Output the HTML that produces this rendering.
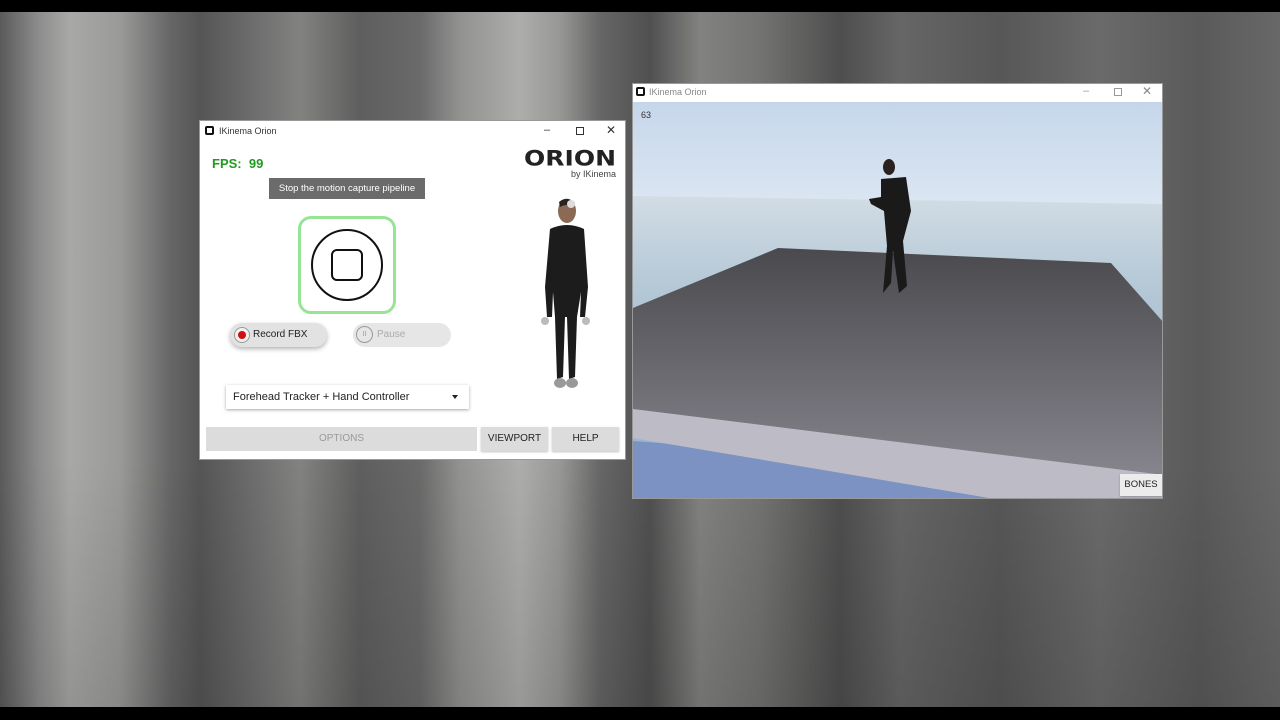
<!DOCTYPE html>
<html><head><meta charset="utf-8"><style>
*{margin:0;padding:0;box-sizing:border-box}
body{width:1280px;height:720px;overflow:hidden;position:relative;font-family:"Liberation Sans",sans-serif;background:#6a6a6a}
.abs{position:absolute}
.bg{left:0;top:0;width:1280px;height:720px;background:
linear-gradient(90deg,#5a5a5a 0px,#8e8e8e 40px,#a8a8a6 70px,#9a9a98 120px,#666 170px,#555 200px,#707070 260px,#828280 300px,#5e5e5e 360px,#6a6a6a 420px,#929290 460px,#adadab 520px,#979795 560px,#666 600px,#505050 650px,#828280 700px,#737371 760px,#4e4e4e 840px,#666 900px,#575757 1000px,#6a6a6a 1100px,#5a5a5a 1200px,#686868 1280px)}
.shade{left:0;top:460px;width:1280px;height:250px;background:linear-gradient(180deg,rgba(0,0,0,0),rgba(0,0,0,.12))}
.bar{left:0;width:1280px;background:#000}
.win{background:#fff}
.tt{font-size:9px;color:#333}
.ctrl{font-size:11px;color:#333}
.btn{background:#dcdcdc;font-size:10px;text-align:center;line-height:24px;box-shadow:0 1px 2px rgba(0,0,0,.25)}
</style></head><body>
<div class="abs bg"></div>
<div class="abs shade"></div>
<div class="abs bar" style="top:0;height:12px"></div>
<div class="abs bar" style="top:707px;height:13px"></div>

<!-- Left window -->
<div class="abs win" style="left:199px;top:120px;width:427px;height:340px;border:1px solid #999">
  <div class="abs" style="left:5px;top:5px;width:9px;height:9px;border:2px solid #111;border-radius:2px"></div>
  <div class="abs tt" style="left:19px;top:5px">IKinema Orion</div>
  <div class="abs ctrl" style="left:344px;top:3px">&#8211;</div>
  <div class="abs" style="left:376px;top:6px;width:8px;height:8px;border:1px solid #333"></div>
  <div class="abs ctrl" style="left:406px;top:2px;font-size:12px">&#10005;</div>
  <div class="abs" style="left:12px;top:35px;font-size:13px;font-weight:bold;color:#229a22">FPS:&nbsp; 99</div>
  <div class="abs" style="left:318px;top:23px;width:98px;font-size:25px;font-weight:bold;letter-spacing:0px;color:#222;transform:scaleY(.85);font-family:'DejaVu Sans',sans-serif;text-align:right">ORION</div>
  <div class="abs" style="left:366px;top:48px;font-size:9px;color:#444;width:50px;text-align:right">by IKinema</div>
  <div class="abs" style="left:69px;top:57px;width:156px;height:21px;background:#6b6b6b;color:#fff;font-size:9.5px;text-align:center;line-height:21px">Stop the motion capture pipeline</div>
  <div class="abs" style="left:98px;top:95px;width:98px;height:98px;border:3px solid #95e595;border-radius:13px"></div>
  <div class="abs" style="left:111px;top:108px;width:72px;height:72px;border:2px solid #111;border-radius:50%"></div>
  <div class="abs" style="left:131px;top:128px;width:32px;height:32px;border:2px solid #111;border-radius:6px"></div>
  <div class="abs" style="left:30px;top:202px;width:97px;height:24px;background:#e2e2e2;border-radius:12px;box-shadow:0 2px 5px rgba(0,0,0,.3)"></div>
  <div class="abs" style="left:34px;top:206px;width:16px;height:16px;border:1px solid #999;border-radius:50%;background:#f2f2f2"></div>
  <div class="abs" style="left:38px;top:210px;width:8px;height:8px;border-radius:50%;background:#d01010"></div>
  <div class="abs" style="left:53px;top:208px;font-size:10px;color:#222">Record FBX</div>
  <div class="abs" style="left:153px;top:202px;width:98px;height:24px;background:#e6e6e6;border-radius:12px"></div>
  <div class="abs" style="left:156px;top:205px;width:17px;height:17px;border:1px solid #999;border-radius:50%;font-size:7px;color:#999;text-align:center;line-height:15px">II</div>
  <div class="abs" style="left:177px;top:208px;font-size:10px;color:#aaa">Pause</div>
  <div class="abs" style="left:26px;top:264px;width:243px;height:24px;background:#fff;box-shadow:0 1px 3px rgba(0,0,0,.35)"></div>
  <div class="abs" style="left:33px;top:270px;font-size:11px;color:#222">Forehead Tracker + Hand Controller</div>
  <div class="abs" style="left:252px;top:274px;width:0;height:0;border-left:3px solid transparent;border-right:3px solid transparent;border-top:4px solid #222"></div>
  <div class="abs btn" style="left:6px;top:306px;width:271px;color:#9a9a9a;box-shadow:none">OPTIONS</div>
  <div class="abs btn" style="left:281px;top:306px;width:67px;color:#222">VIEWPORT</div>
  <div class="abs btn" style="left:352px;top:306px;width:67px;color:#222">HELP</div>
  <svg class="abs" style="left:325px;top:76px" width="70" height="205" viewBox="0 0 70 205">
    <ellipse cx="42" cy="14" rx="9" ry="12" fill="#8a6a55"/>
    <path d="M34 5 Q42 -2 50 6 L48 10 Q42 6 35 10Z" fill="#2a2220"/>
    <circle cx="46" cy="7" r="4" fill="#ddd"/>
    <path d="M25 32 Q42 24 59 32 L63 90 L60 120 L55 120 L56 95 L52 120 L50 180 L44 182 L42 120 L40 120 L38 180 L32 182 L30 120 L28 95 L27 120 L22 120 L20 90Z" fill="#1c1c1c"/>
    <circle cx="20" cy="124" r="4" fill="#bbb"/><circle cx="61" cy="124" r="4" fill="#bbb"/>
    <ellipse cx="35" cy="186" rx="6" ry="5" fill="#999"/><ellipse cx="47" cy="186" rx="6" ry="5" fill="#999"/>
  </svg>
</div>

<!-- Right window -->
<div class="abs win" style="left:632px;top:83px;width:531px;height:416px;border:1px solid #999;overflow:hidden">
  <div class="abs" style="left:3px;top:3px;width:9px;height:9px;border:2px solid #111;border-radius:2px"></div>
  <div class="abs tt" style="left:16px;top:3px;color:#888">IKinema Orion</div>
  <div class="abs ctrl" style="left:450px;top:1px;color:#999">&#8211;</div>
  <div class="abs" style="left:481px;top:4px;width:8px;height:8px;border:1px solid #999"></div>
  <div class="abs ctrl" style="left:509px;top:0px;font-size:12px;color:#888">&#10005;</div>
  <svg class="abs" style="left:0;top:18px" width="531" height="398" viewBox="632 101 531 398">
    <defs>
      <linearGradient id="sky" x1="0" y1="0" x2="0" y2="1">
        <stop offset="0" stop-color="#c6d6ea"/><stop offset=".35" stop-color="#e2ecf5"/><stop offset="1" stop-color="#d8e4ee"/>
      </linearGradient>
      <linearGradient id="sea" x1="0" y1="0" x2="0" y2="1">
        <stop offset="0" stop-color="#d2dce4"/><stop offset=".3" stop-color="#b4c8d6"/><stop offset="1" stop-color="#8fb0cc"/>
      </linearGradient>
      <linearGradient id="floor" x1="0" y1="0" x2="0" y2="1">
        <stop offset="0" stop-color="#4a4a4e"/><stop offset="1" stop-color="#86848c"/>
      </linearGradient>
    </defs>
    <rect x="632" y="101" width="531" height="398" fill="url(#sky)"/>
    <polygon points="632,195 1163,203 1163,499 632,499" fill="url(#sea)"/>
    <polygon points="632,440 1163,480 1163,499 632,499" fill="#7b92c2"/>
    <polygon points="632,408 1163,474 1163,499 1000,499 632,437" fill="#bdbcc6"/>
    <polygon points="777,247 1110,262 1163,322 1163,474 632,408 632,307" fill="url(#floor)"/>
    <text x="640" y="117" font-size="9" fill="#333" font-family="Liberation Sans">63</text>
    <ellipse cx="888" cy="166" rx="6" ry="8" fill="#2a2220"/>
    <path d="M880 178 L905 176 L910 210 L902 240 L906 285 L898 292 L892 250 L890 282 L882 292 L886 245 L883 210 L870 203 L868 198 L880 196Z" fill="#1a1a1a"/>
  </svg>
  <div class="abs btn" style="left:487px;top:390px;width:42px;height:22px;line-height:22px;background:#ececec;color:#222;font-size:9.5px">BONES</div>
</div>
</body></html>
